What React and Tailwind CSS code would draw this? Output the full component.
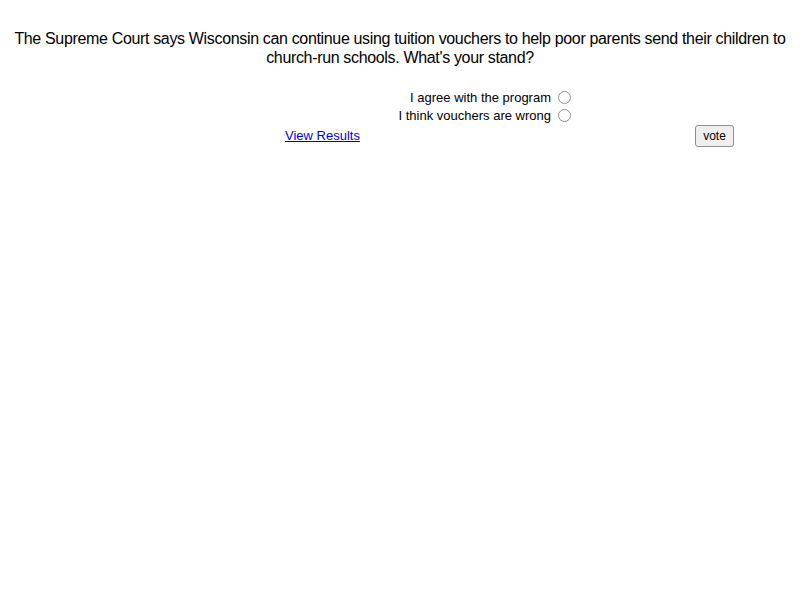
export default function App() {
  return (
    <div className="min-h-[600px] bg-white text-black" style={{ fontFamily: '"Liberation Sans", Arial, sans-serif' }}>
      <p className="px-[4px] pt-[29px] text-center text-[16px] leading-[19px] tracking-[-0.34px]">
        The Supreme Court says Wisconsin can continue using tuition vouchers to help poor parents send their children to church-run schools. What's your stand?
      </p>
      <div className="ml-[280px] mt-[23px] w-[460px]">
        <div className="flex w-[291px] flex-col items-end gap-[3px] text-[13px] leading-[15px]">
          <label className="flex items-center gap-[7px]">
            <span>I agree with the program</span>
            <span className="h-[13px] w-[13px] rounded-full border border-[#8f8f8f] bg-white" />
          </label>
          <label className="flex items-center gap-[7px]">
            <span>I think vouchers are wrong</span>
            <span className="h-[13px] w-[13px] rounded-full border border-[#8f8f8f] bg-white" />
          </label>
        </div>
        <div className="mt-[2px] flex items-center justify-between pl-[5px] pr-[6px]">
          <a href="#" className="text-[13px] text-[#0000ee] underline">View Results</a>
          <button className="h-[22px] w-[39px] rounded-[3px] border border-[#8f8f8f] bg-[#efefef] text-[12px]">vote</button>
        </div>
      </div>
    </div>
  );
}
